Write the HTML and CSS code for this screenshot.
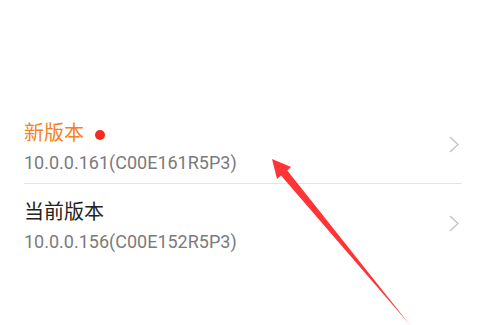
FILE: index.html
```html
<!DOCTYPE html>
<html lang="zh-CN">
<head>
<meta charset="utf-8">
<title>版本</title>
<link rel="stylesheet" href="styles.css">
</head>
<body>
<div class="page">
  <ul class="list">
    <li class="row">
      <div class="text">
        <div class="title new"><span>新版本</span><span class="dot"></span></div>
        <div class="sub">10.0.0.161(C00E161R5P3)</div>
      </div>
      <svg class="chev" width="10" height="17" viewBox="0 0 10 17"><polyline points="1,1 9,8.5 1,16" fill="none" stroke="#c4c4c4" stroke-width="1.5"/></svg>
    </li>
    <li class="row">
      <div class="text">
        <div class="title"><span>当前版本</span></div>
        <div class="sub">10.0.0.156(C00E152R5P3)</div>
      </div>
      <svg class="chev" width="10" height="17" viewBox="0 0 10 17"><polyline points="1,1 9,8.5 1,16" fill="none" stroke="#c4c4c4" stroke-width="1.5"/></svg>
    </li>
  </ul>
  <svg class="arrow" width="492" height="325" viewBox="0 0 492 325">
    <polygon points="272,159 291,167 287.3,170.5 410,325 281,175.5 277,179" fill="#ff3437"/>
  </svg>
</div>
</body>
</html>
```

FILE: styles.css
```css
html, body {
  margin: 0;
  padding: 0;
  background: #ffffff;
}
.page {
  position: relative;
  width: 492px;
  height: 325px;
  overflow: hidden;
  font-family: Roboto, "Noto Sans CJK SC", sans-serif;
}
.list {
  list-style: none;
  margin: 105px 30px 0 24px;
  padding: 0;
}
.row {
  display: flex;
  align-items: center;
  justify-content: space-between;
  height: 78px;
  border-bottom: 1px solid #e3e3e3;
}
.row:last-child {
  border-bottom: none;
}
.text {
  display: flex;
  flex-direction: column;
  margin-top: 6px;
}
.title {
  display: flex;
  align-items: center;
  font-family: "Noto Sans CJK SC", sans-serif;
  font-size: 20px;
  line-height: 32px;
  color: #222222;
}
.title.new {
  color: #f5821f;
}
.dot {
  width: 10px;
  height: 10px;
  border-radius: 50%;
  background: #f42c1f;
  margin-left: 11px;
  margin-top: 6px;
}
.sub {
  font-family: Roboto, sans-serif;
  font-size: 18px;
  line-height: 30px;
  color: #7b7b7b;
}
.chev {
  display: block;
  margin-right: 3px;
}
.arrow {
  position: absolute;
  left: 0;
  top: 0;
  pointer-events: none;
}
```
